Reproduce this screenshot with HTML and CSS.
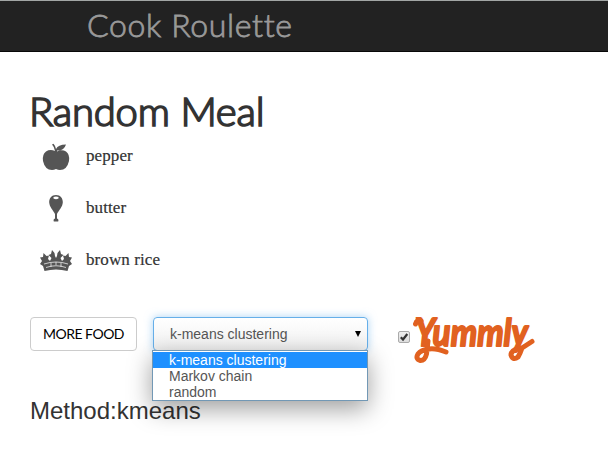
FILE: index.html
```html
<!DOCTYPE html>
<html lang="en">
<head>
<meta charset="utf-8">
<title>Cook Roulette</title>
<link rel="stylesheet" href="styles.css">
</head>
<body>
<header class="navbar"><span class="brand">Cook Roulette</span></header>
<main class="content">
  <h1 class="title">Random Meal</h1>
  <ul class="meal">
    <li class="item">
      <svg class="icon" viewBox="0 0 32 32"><path d="M15 8Q14.500 4 12 1.500L13.500 .8Q15.500 3 16 6Q18 1.500 26 1.500Q24 8 17 7.500V8.500Q22 6 26 8.500Q30 11.500 29 18Q27 27 20 27Q18 27 16 26Q14 27 12 27Q5 27 3 18Q2 11.500 6 8.500Q10 6 15 8Z"/></svg>
      <span>pepper</span>
    </li>
    <li class="item">
      <svg class="icon" viewBox="0 0 32 32"><path fill-rule="evenodd" d="M16 0C11.500 0 9 3.500 9.200 7.500C9.500 12 13 15 15 19V23.500Q13 24 13.800 26.500H18.200Q19 24 17 23.500V19C19 15 22.500 12 22.800 7.500C23 3.500 20.500 0 16 0ZM13.500 2Q16 .8 18.500 2V3.500Q16 5 13.500 3.500Z"/></svg>
      <span>butter</span>
    </li>
    <li class="item">
      <svg class="icon" viewBox="0 0 32 32"><path d="M3.500 3L6.500 6L9 5.500L8 9L10 11L11.500 8L8.500 5L11 4L12 0L14.500 3L15 6L16 8L17 6L17.500 3L20 0L21 4L23.500 5L20.500 8L22 11L24 9L23 5.500L25.500 6L28.500 3L29 7L32 7.500L30 11L32 14L29 16L27.500 21Q16 18 4.500 21L3 16L0 14L2 11L0 7.500L3 7Z"/><path class="grain" d="M4 14Q16 10 28 14M6 17.500Q16 14 26 17.500M11 13V17M21 13V17M16 12V15"/></svg>
      <span>brown rice</span>
    </li>
  </ul>
  <div class="controls">
    <button class="more">MORE FOOD</button>
    <div class="select">
      <span>k-means clustering</span>
      <svg class="arrow" viewBox="0 0 6 6"><path d="M0 0H6L3 6Z"/></svg>
      <ul class="options">
        <li class="selected">k-means clustering</li>
        <li>Markov chain</li>
        <li>random</li>
      </ul>
    </div>
    <label class="source">
      <span class="check"><svg viewBox="0 0 10 10"><path d="M1.800 5.200L4 7.500L8.300 2"/></svg></span>
      <svg class="yummly" viewBox="0 0 124 48"><text x="3" y="29" textLength="113" lengthAdjust="spacingAndGlyphs">Yummly</text><path d="M3.500 7Q5 2 9 4M16 24L14.500 37Q13 43.500 8.500 43.500Q3 42 6 37Q9 33 17 32Q24 31 34 35M108 31Q99 33 99 38Q101 44 106 40Q108 37 110 31L120 24.500"/></svg>
    </label>
  </div>
  <h2 class="method">Method:kmeans</h2>
</main>
</body>
</html>
```

FILE: styles.css
```css
* { box-sizing: border-box; }
body { margin: 0; height: 470px; overflow: hidden; background: #fff; color: #333; font-family: "Liberation Sans", Arial, sans-serif; font-size: 14px; }
.navbar { height: 52px; padding-left: 87px; background: #222; border-top: 1px solid #a2a6a5; border-bottom: 1px solid #080808; }
.brand { display: block; font: 300 32px/48px Lato, sans-serif; letter-spacing: 0.65px; color: #999; -webkit-text-stroke: 0.8px #999; white-space: nowrap; }
.content { padding: 38px 30px 0; }
.title { margin: 0 0 0 -1px; height: 50px; font: 300 40px/43px Lato, sans-serif; letter-spacing: -0.2px; -webkit-text-stroke: 1.7px #333; white-space: nowrap; }
.meal { margin: 0; padding: 0 0 0 10px; list-style: none; }
.item { display: flex; height: 52px; font: 17px/32px "Liberation Serif", serif; }
.item span { margin-left: 14px; letter-spacing: 0.1px; -webkit-text-stroke: 0.2px #333; }
.icon { width: 32px; height: 32px; margin-top: 3px; fill: #555; }
.grain { fill: none; stroke: #fff; stroke-width: .7; }
.item:last-child .icon { margin-top: 6px; }
.controls { display: flex; height: 56px; margin-top: 21px; }
.more { width: 107px; height: 34px; padding: 0 0 2px; background: #fff; border: 1px solid #ccc; border-radius: 4px; color: #000; font: 400 14px Lato, sans-serif; letter-spacing: -0.5px; }
.select { position: relative; display: flex; justify-content: space-between; align-items: center; width: 215px; height: 34px; margin-left: 16px; padding: 0 6px 0 16px; border: 1px solid #66afe9; border-radius: 4px; background: linear-gradient(#fff, #f0f0f0); color: #555; box-shadow: 0 0 8px rgba(102,175,233,.55); }
.arrow { width: 6px; height: 6px; fill: #000; }
.options { position: absolute; top: 32px; left: -2px; width: 216px; height: 51px; margin: 0; padding: 1px 0; list-style: none; background: #fff; border: 1px solid #7298b5; box-shadow: 0 8px 24px rgba(0,0,0,.38); }
.options li { height: 16px; padding-left: 16px; line-height: 17px; color: #555; }
.options .selected { background: #1e90ff; color: #fff; }
.source { display: flex; margin-left: 30px; }
.check { width: 12px; height: 12px; margin-top: 14px; border: 1px solid #aaa; border-radius: 2px; background: linear-gradient(#eee, #ddd); }
.check svg { display: block; width: 10px; height: 10px; fill: none; stroke: #333; stroke-width: 2.200; }
.yummly { width: 124px; height: 48px; margin-left: 2px; overflow: visible; }
.yummly text { font: italic 700 38px Lato, sans-serif; fill: #e16120; stroke: #e16120; stroke-width: 2; stroke-linejoin: round; }
.yummly path { fill: none; stroke: #e16120; stroke-width: 5; stroke-linecap: round; stroke-linejoin: round; }
.method { margin: 23px 0 0; font-size: 24px; font-weight: 400; line-height: 30px; }
```
